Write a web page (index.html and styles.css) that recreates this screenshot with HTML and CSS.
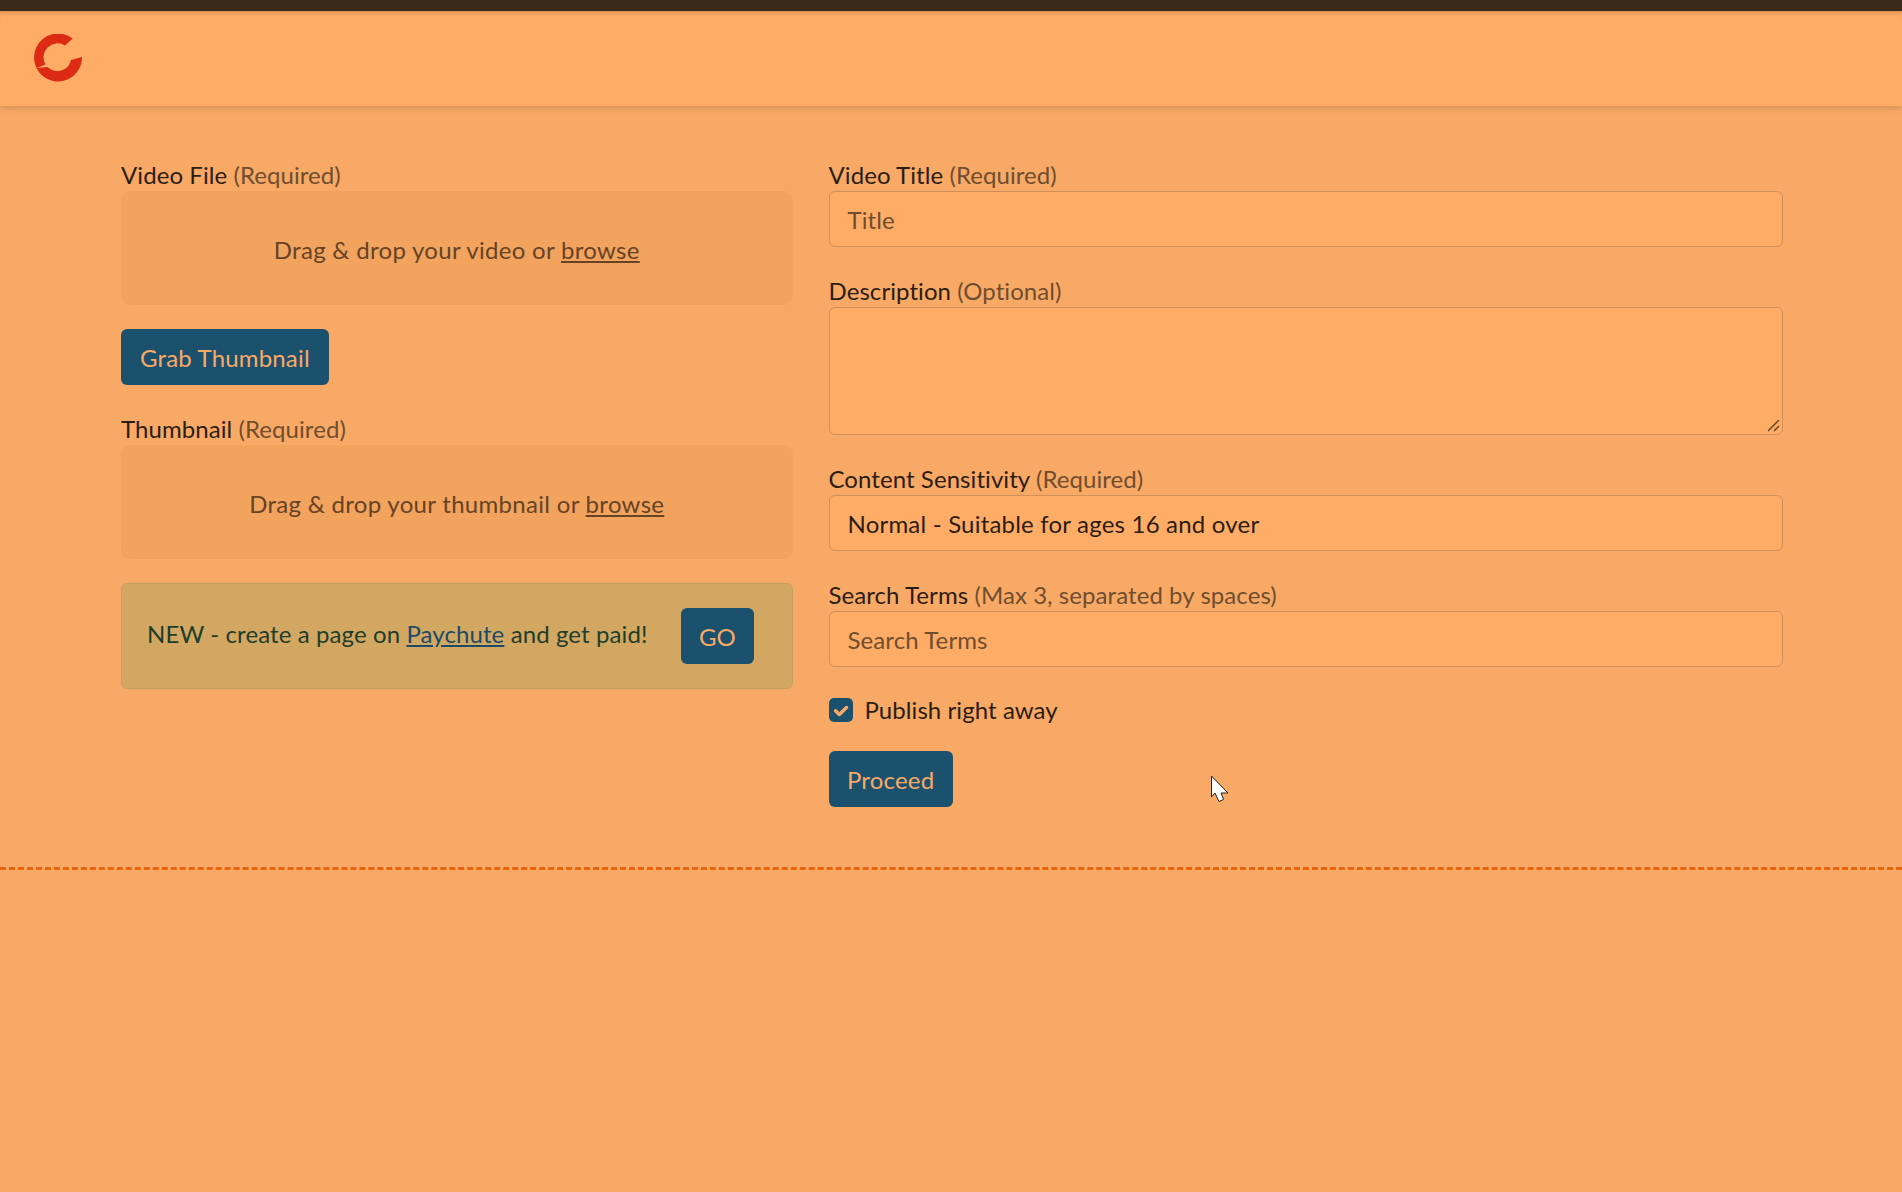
FILE: index.html
```html
<!DOCTYPE html>
<html lang="en">
<head>
<meta charset="utf-8">
<title>Upload</title>
<link rel="stylesheet" href="styles.css">
</head>
<body>
<div class="topbar"></div>
<nav class="nav">
  <svg class="logo" viewBox="0 0 48 48" width="48" height="48"><path fill="#dc2a14" d="M38.700 4.500A24 24 0 1 0 48 23L37 26A14 14 0 0 1 13.500 33L2.700 34L11.500 30.500A14 14 0 0 1 31 11.500Z"/></svg>
</nav>
<main class="content">
  <section class="col-left">
    <div class="field">
      <div class="label">Video File <span class="muted">(Required)</span></div>
      <div class="drop">Drag &amp; drop your video or <u>browse</u></div>
    </div>
    <button class="btn grab">Grab Thumbnail</button>
    <div class="field">
      <div class="label">Thumbnail <span class="muted">(Required)</span></div>
      <div class="drop">Drag &amp; drop your thumbnail or <u>browse</u></div>
    </div>
    <div class="alert">
      <span class="alert-text">NEW - create a page on <a href="#">Paychute</a> and get paid!</span>
      <button class="btn go">GO</button>
    </div>
  </section>
  <section class="col-right">
    <div class="field">
      <div class="label">Video Title <span class="muted">(Required)</span></div>
      <div class="input placeholder">Title</div>
    </div>
    <div class="field">
      <div class="label">Description <span class="muted">(Optional)</span></div>
      <div class="input textarea">
        <svg class="grip" viewBox="0 0 12 12" width="12" height="12"><path d="M0 11L11 0M6 11L11 6" stroke="#6b4426" stroke-width="1.500" fill="none"/></svg>
      </div>
    </div>
    <div class="field">
      <div class="label">Content Sensitivity <span class="muted">(Required)</span></div>
      <div class="input select">Normal - Suitable for ages 16 and over</div>
    </div>
    <div class="field">
      <div class="label">Search Terms <span class="muted">(Max 3, separated by spaces)</span></div>
      <div class="input placeholder">Search Terms</div>
    </div>
    <div class="check-row">
      <span class="check"><svg viewBox="0 0 24 24" width="24" height="24"><path d="M6.500 12.800L10.300 16.500L17.500 9.500" stroke="#f9a966" stroke-width="3.500" fill="none" stroke-linecap="round" stroke-linejoin="round"/></svg></span>
      <span>Publish right away</span>
    </div>
    <button class="btn">Proceed</button>
  </section>
</main>
<hr class="dashed">
<svg class="cursor" viewBox="0 0 20 28" width="20" height="28"><path d="M1.500 1V22L5 18L9 26.500L13.500 24.500L11 18H18Z" fill="#fff" stroke="#222" stroke-width="1"/></svg>
</body>
</html>
```
FILE: styles.css
```css
* { box-sizing: border-box; }
html, body { margin: 0; }
body {
  position: relative;
  min-height: 1192px;
  background: #f9a966;
  color: #2c1d12;
  font-family: "Lato", "Open Sans", sans-serif;
  font-size: 24px;
  line-height: 36px;
  letter-spacing: 0.07px;
  overflow: hidden;
}
.topbar { height: 11px; background: #3a2a1c; }
.nav {
  height: 95px;
  padding: 23px 34px;
  background: #ffac66;
  box-shadow: 0 2px 6px rgba(58, 42, 28, 0.2), inset 0 5px 5px -4px rgba(58, 42, 28, 0.3);
}
.logo { display: block; }
.content {
  display: grid;
  grid-template-columns: 5fr 7fr;
  width: 1698px;
  margin: 0 0 0 103px;
  padding-top: 57px;
}
.col-left, .col-right { padding: 0 18px; display: flex; flex-direction: column; align-items: flex-start; }
.field { width: 100%; }
.label { height: 28px; line-height: 24px; }
.muted { color: #6f4e30; }
.drop {
  height: 114px;
  margin-bottom: 24px;
  background: #f2a45f;
  border-radius: 9px;
  text-align: center;
  line-height: 118px;
  color: #674225;
  letter-spacing: 0.3px;
}
.btn {
  height: 56px;
  padding: 2px 18.500px 0;
  border: 0;
  border-radius: 6px;
  background: #1c516e;
  color: #f9a966;
  font: inherit;
  letter-spacing: 0.17px;
}
.grab { margin-bottom: 32px; padding: 2px 19px 0; }
.go { padding: 2px 17.500px 0; }
.alert {
  display: flex;
  align-items: center;
  justify-content: space-between;
  width: 100%;
  height: 106px;
  padding: 0 38px 0 25px;
  background: #d2a762;
  border: 1px solid #bfa060;
  border-radius: 6px;
  color: #1f3d2a;
  letter-spacing: 0.1px;
}
.alert-text { position: relative; top: -2px; }
.alert a { color: #1c4a6a; }
.input {
  position: relative;
  height: 56px;
  margin-bottom: 32px;
  padding: 10px 18px 8px;
  background: #ffac66;
  border: 1.500px solid #cf9159;
  border-radius: 6px;
}
.textarea { height: 128px; }
.placeholder { color: #6f4e30; letter-spacing: 0.1px; }
.select { letter-spacing: 0.2px; }
.grip { position: absolute; right: 2px; bottom: 2px; }
.check-row { display: flex; align-items: center; gap: 12px; height: 36px; margin-bottom: 23px; margin-top: -7px; }
.check { width: 24px; height: 24px; border-radius: 5px; background: #1c516e; }
.check svg { display: block; }
.dashed {
  margin: 60px 0 0;
  border: 0;
  border-top: 3px dashed #e8650f;
}
.cursor { position: absolute; left: 1210px; top: 775px; }
```
